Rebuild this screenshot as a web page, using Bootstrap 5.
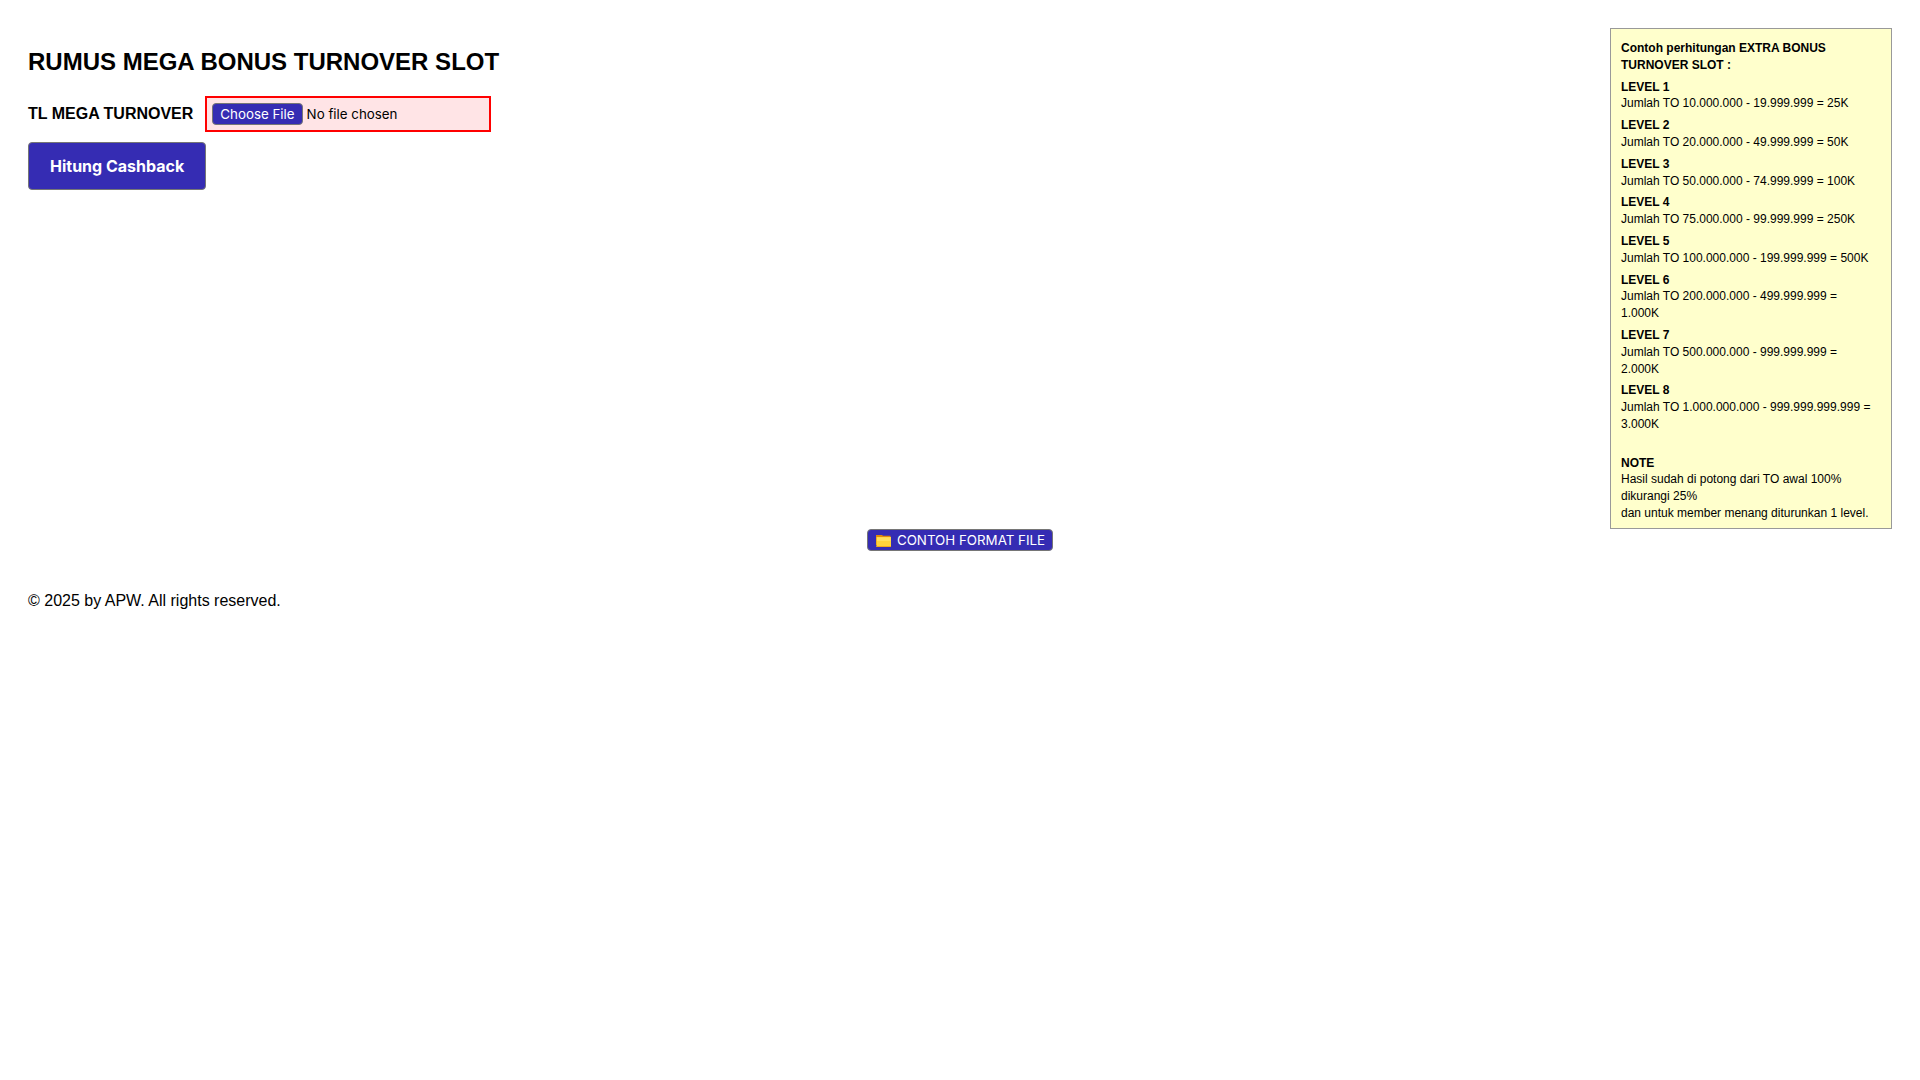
<!DOCTYPE html>
<html lang="id">
<head>
<meta charset="utf-8">
<meta name="viewport" content="width=device-width, initial-scale=1">
<title>Rumus Mega Bonus Turnover Slot</title>
<link href="https://cdn.jsdelivr.net/npm/bootstrap@5.3.0/dist/css/bootstrap.min.css" rel="stylesheet">
<style>
  body { padding: 28px; background: #fff; color: #000; font: 16px/1.2 "Liberation Sans", Arial, sans-serif; }
  .page-title { font-size: 24px; font-weight: 700; line-height: 28px; margin: 20px 0; }
  .form-row { gap: 12px; margin-bottom: 10px; }
  .file-box { width: 286px; padding: 5px; border: 2px solid #f00; background: #ffe4e6; font: smaller/16px Inter, sans-serif; height: 36px; }
  .file-box::file-selector-button,
  .brand-btn { background: #352cb3; color: #fff; border: 1px solid #767676; border-radius: 4px; font-family: Inter, sans-serif; }
  .file-box::file-selector-button { padding: 2px 7px; line-height: 16px; margin-inline-end: 4px; }
  .submit-btn { font-size: 16px; font-weight: 700; line-height: 20px; padding: 13px 21px; }
  .sample-btn { font-size: smaller; line-height: 16px; padding: 2px 7px; gap: 5px; }
  .rules { width: 282px; padding: 11px 16px 6px 10px; border: 1px solid #999; background: #ffc; font-size: 12px; line-height: 1.4; }
  .rules p { margin: 0 0 5px; }
  .rules p:last-child { margin: 0; }
  .site-footer { margin-top: 40px; }
</style>
<script src="https://cdn.jsdelivr.net/npm/bootstrap@5.3.0/dist/js/bootstrap.bundle.min.js" defer></script>
</head>
<body>
<main class="d-flex justify-content-between align-items-start">
  <form>
    <h1 class="page-title">RUMUS MEGA BONUS TURNOVER SLOT</h1>
    <div class="form-row d-flex align-items-center">
      <label for="turnover" class="fw-bold">TL MEGA TURNOVER</label>
      <input id="turnover" class="file-box" type="file">
    </div>
    <button type="button" class="brand-btn submit-btn">Hitung Cashback</button>
  </form>
  <aside class="rules flex-shrink-0">
    <p><b>Contoh perhitungan EXTRA BONUS TURNOVER SLOT :</b></p>
    <p><b>LEVEL 1</b><br>Jumlah TO 10.000.000 - 19.999.999 = 25K</p>
    <p><b>LEVEL 2</b><br>Jumlah TO 20.000.000 - 49.999.999 = 50K</p>
    <p><b>LEVEL 3</b><br>Jumlah TO 50.000.000 - 74.999.999 = 100K</p>
    <p><b>LEVEL 4</b><br>Jumlah TO 75.000.000 - 99.999.999 = 250K</p>
    <p><b>LEVEL 5</b><br>Jumlah TO 100.000.000 - 199.999.999 = 500K</p>
    <p><b>LEVEL 6</b><br>Jumlah TO 200.000.000 - 499.999.999 = 1.000K</p>
    <p><b>LEVEL 7</b><br>Jumlah TO 500.000.000 - 999.999.999 = 2.000K</p>
    <p><b>LEVEL 8</b><br>Jumlah TO 1.000.000.000 - 999.999.999.999 = 3.000K</p>
    <p><br><b>NOTE</b><br>Hasil sudah di potong dari TO awal 100% dikurangi 25%<br>dan untuk member menang diturunkan 1 level.</p>
  </aside>
</main>
<div class="d-flex justify-content-center">
  <button type="button" class="brand-btn sample-btn d-flex align-items-center">
    <svg width="17" height="16" viewBox="0 0 17 16" aria-hidden="true">
      <path d="M1 3h6l1 .800h7.500V13H1z" fill="#e08a0b"/>
      <path d="M1.500 5h14.500v10H1.500z" fill="#ffd23c"/>
      <path d="M2 5.500h13.500V9H2z" fill="#ffdf5e"/>
      <path d="M1.500 14H16v1H1.500z" fill="#f2a91c"/>
    </svg>
    <span>CONTOH FORMAT FILE</span>
  </button>
</div>
<footer class="site-footer">© 2025 by APW. All rights reserved.</footer>
</body>
</html>
